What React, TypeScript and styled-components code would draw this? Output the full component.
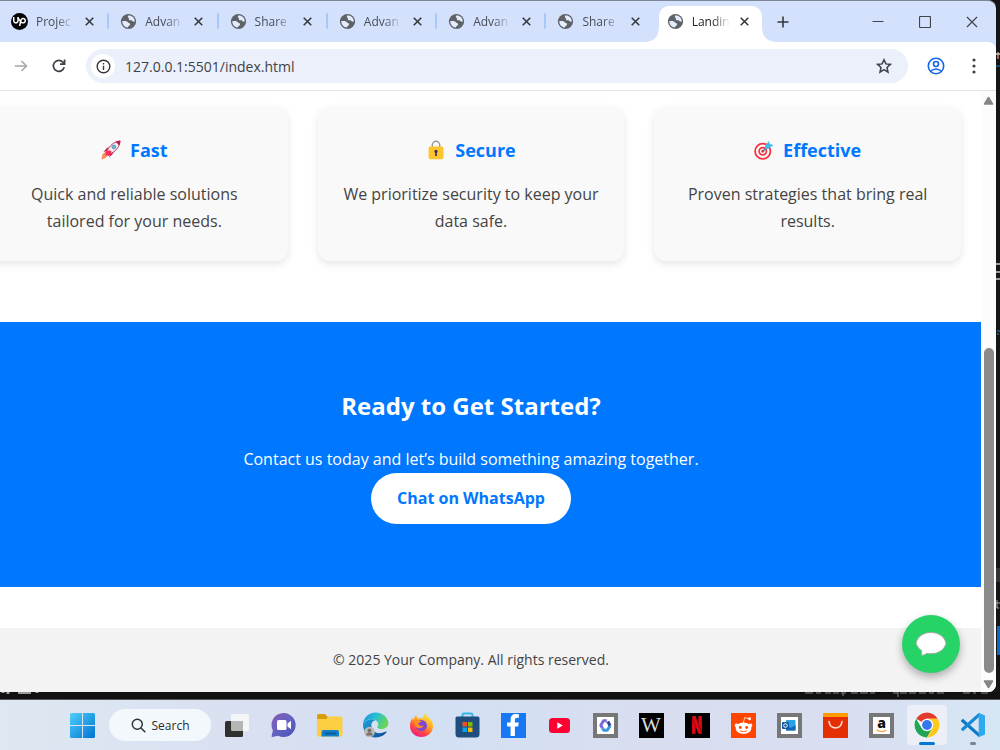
import React from 'react';
import styled, { createGlobalStyle } from 'styled-components';
import { FaFacebookF, FaRedditAlien } from 'react-icons/fa';
import { SiNetflix, SiUpwork } from 'react-icons/si';

const GlobalStyle = createGlobalStyle`
  * { box-sizing: border-box; }
  body { margin: 0; background: #141414; font-family: "Open Sans", "Noto Sans", sans-serif; }
  h2, h3, p { margin: 0; }
  svg { display: block; flex: none; }
  button { border: 0; padding: 0; background: none; font: inherit; color: inherit; }
`;

/* ---------- Desktop ---------- */

const Desktop = styled.div`
  min-height: 100vh;
  display: flex;
  flex-direction: column;
  overflow: hidden;
`;

const WindowRow = styled.div`
  flex: 1;
  display: flex;
  background: #161616;
`;

const BrowserWindow = styled.div`
  position: relative;
  flex: 1;
  min-width: 0;
  display: flex;
  flex-direction: column;
  overflow: hidden;
  border-top: 1px solid #7d8797;
  border-radius: 0 8px 8px 0;
  background: #d3e1fd;
`;

const StatusStrip = styled.div`
  height: 8px;
  display: flex;
  background: #111;
  border-bottom: 1px solid #55565a;
`;

/* ---------- Tab strip ---------- */

const TabStrip = styled.div`
  height: 41px;
  display: flex;
  align-items: center;
`;

const TabList = styled.div`
  flex: 0 1 765px;
  min-width: 0;
  height: 100%;
  display: flex;
`;

const Tab = styled.div<{ $active?: boolean; $divided?: boolean }>`
  position: relative;
  flex: 1;
  min-width: 0;
  display: flex;
  align-items: center;
  padding: 0 14px 0 11px;
  color: ${p => (p.$active ? '#202124' : '#474c57')};

  &::after {
    content: '';
    display: ${p => (p.$divided ? 'block' : 'none')};
    position: absolute;
    right: 0;
    top: 12px;
    width: 2px;
    height: 16px;
    border-radius: 1px;
    background: #a8c7fa;
  }
`;

const ActiveShape = styled.div`
  position: absolute;
  inset: 5px 3px 0 3px;
  border-radius: 10px 10px 0 0;
  background: #fff;

  &::before, &::after {
    content: '';
    position: absolute;
    bottom: 0;
    width: 12px;
    height: 12px;
  }
  &::before {
    right: 100%;
    background: radial-gradient(circle at 0 0, transparent 11px, #fff 12px);
  }
  &::after {
    left: 100%;
    background: radial-gradient(circle at 100% 0, transparent 11px, #fff 12px);
  }
`;

const TabContent = styled.div`
  position: relative;
  flex: 1;
  min-width: 0;
  display: flex;
  align-items: center;
`;

const TabTitle = styled.span`
  flex: 1;
  min-width: 0;
  margin: 0 6px 0 8px;
  white-space: nowrap;
  font-size: 12px;
  line-height: 18px;
  mask-image: linear-gradient(90deg, #000 50%, transparent 92%);
`;

const IconButton = styled.button<{ $w: number }>`
  width: ${p => p.$w}px;
  height: 32px;
  flex: none;
  display: flex;
  align-items: center;
  justify-content: center;
`;

const WindowControls = styled.div`
  margin-left: auto;
  display: flex;
`;

/* ---------- Toolbar ---------- */

const Toolbar = styled.div`
  height: 49px;
  display: flex;
  align-items: center;
  padding: 0 4px 0 2px;
  background: #fff;
  border-bottom: 1px solid #e1e3e6;
  border-radius: 0 8px 0 0;
`;

const AddressBar = styled.div`
  flex: 1;
  height: 34px;
  display: flex;
  align-items: center;
  margin: 0 8px;
  padding: 0 8px 0 5px;
  border-radius: 17px;
  background: #ebf0fa;
`;

const SiteInfo = styled.button`
  width: 24px;
  height: 24px;
  display: flex;
  align-items: center;
  justify-content: center;
  border-radius: 50%;
  background: #fff;
`;

const UrlInput = styled.input`
  flex: 1;
  min-width: 0;
  padding: 0;
  margin-left: 10px;
  border: 0;
  outline: 0;
  background: none;
  color: #3f4247;
  font: 14px "Open Sans", "Noto Sans", sans-serif;
`;

/* ---------- Web page ---------- */

const ScrollArea = styled.div`
  flex: 1;
  display: flex;
  background: #fff;
`;

const PageView = styled.div`
  flex: 1;
  min-width: 0;
  overflow: hidden;
`;

/* The page is wider than the view and scrolled a little to the right. */
const Page = styled.main`
  min-height: 100%;
  margin-left: -39px;
  display: flex;
  flex-direction: column;
  text-align: center;
`;

const Features = styled.section`
  display: grid;
  grid-template-columns: repeat(3, 1fr);
  gap: 30px;
  padding: 16px 20px 61px;
`;

const Card = styled.article`
  min-height: 154px;
  padding: 28px 24px 26px;
  border-radius: 12px;
  background: #f9f9f9;
  box-shadow: 0 3px 8px rgba(0, 0, 0, 0.1);
`;

const CardTitle = styled.h3`
  display: flex;
  align-items: center;
  justify-content: center;
  gap: 9px;
  margin-bottom: 16px;
  color: #0077ff;
  font-size: 18px;
  line-height: 30px;
`;

const CardText = styled.p`
  color: #444;
  font-size: 16px;
  line-height: 27px;
`;

const CallToAction = styled.section`
  display: flex;
  flex-direction: column;
  align-items: center;
  padding: 64px 20px 63px;
  margin-bottom: 41px;
  background: #0077ff;
  color: #fff;
`;

const CtaTitle = styled.h2`
  margin-bottom: 20px;
  font-size: 24px;
  line-height: 40px;
`;

const CtaText = styled.p`
  font-size: 16px;
  line-height: 27px;
`;

const CtaLink = styled.a`
  padding: 12px 26px;
  border-radius: 26px;
  background: #fff;
  color: #0077ff;
  font-size: 16px;
  font-weight: 700;
  line-height: 27px;
  text-decoration: none;
`;

const Footer = styled.footer`
  flex: 1;
  padding: 19px;
  background: #f3f3f3;
  color: #444;
  font-size: 14px;
  line-height: 26px;
`;

const ChatButton = styled.button`
  position: absolute;
  right: 36px;
  bottom: 19px;
  width: 58px;
  height: 58px;
  display: flex;
  align-items: center;
  justify-content: center;
  border-radius: 50%;
  background: #25d366;
  box-shadow: 0 4px 8px rgba(0, 0, 0, 0.3);
`;

const Scrollbar = styled.div`
  width: 15px;
  display: flex;
  flex-direction: column;
  align-items: center;
  padding: 5px 0 3px;
  background: #fcfcfc;
`;

const ScrollSpace = styled.div`
  flex: 243;
`;

const ScrollThumb = styled.div`
  flex: 324;
  width: 10px;
  margin-bottom: 7px;
  border-radius: 5px;
  background: #8b8b8b;
`;

/* ---------- Taskbar ---------- */

const Taskbar = styled.nav`
  height: 50px;
  display: flex;
  align-items: center;
  padding-left: 59px;
  background: linear-gradient(90deg, #dde8f2 0%, #d9e0f1 25%, #d3e0f3 45%, #d8def0 65%, #d9dff0 85%, #d6e6f5 100%);
`;

const TaskItem = styled.button<{ $active?: boolean; $running?: boolean }>`
  position: relative;
  flex: none;
  width: 46px;
  height: 50px;
  display: flex;
  align-items: center;
  justify-content: center;

  &::before {
    content: '';
    display: ${p => (p.$active ? 'block' : 'none')};
    position: absolute;
    inset: 5px 3px;
    border-radius: 4px;
    background: #eceff8;
  }
  &::after {
    content: '';
    display: ${p => (p.$active || p.$running ? 'block' : 'none')};
    position: absolute;
    bottom: 5px;
    width: ${p => (p.$active ? 16 : 6)}px;
    height: 3px;
    border-radius: 2px;
    background: ${p => (p.$active ? '#0078d4' : '#7d838b')};
  }
  svg { position: relative; }
`;

const SearchBox = styled.button`
  flex: none;
  width: 102px;
  height: 32px;
  display: flex;
  align-items: center;
  justify-content: center;
  gap: 6px;
  margin: 0 3px 0 4px;
  border-radius: 16px;
  background: #f3f8fc;
  color: #2b2b2b;
  font-size: 12px;
`;

const Tile = styled.span<{ $bg: string; $framed?: boolean }>`
  width: 25px;
  height: 25px;
  display: flex;
  align-items: center;
  justify-content: center;
  border: ${p => (p.$framed ? '4px solid #777' : '0')};
  background: ${p => p.$bg};
`;

const SerifMark = styled.span`
  color: #ddd;
  font: 21px/25px "Liberation Serif", serif;
`;

/* ---------- Drawings ---------- */

const Globe = () => (
  <svg width="17" height="17" viewBox="0 0 17 17">
    <circle cx="8.500" cy="8.500" r="7.600" fill="#5f6368" />
    <path d="M8.400 2.500C9.700 2.100 11.700 2.700 12.900 4c1.200 1.200 1.900 2.700 1.900 4.300-.9.600-2 .4-2.400-.4-.4-.9-1.300-.7-2.100-.7-1.100 0-1.700-.8-1.400-1.800.2-.6-.9-.7-1-1.500 0-.7-.1-1.200.5-1.400zM2.200 8.300c1.300-.4 3.400-.3 4.700.2 1.100.4 1 1.300 2 1.600 1.100.3 1.500 1 1 1.900-.4.700-1.300.6-1.600 1.400-.2.600-.4 1.100-1 1.200-2.900-.6-5-3.100-5.100-6.300z" fill="#e3ecfd" />
  </svg>
);

const Cross = ({ size = 9, weight = 1.7, color = '#33363b' }: { size?: number; weight?: number; color?: string }) => (
  <svg width={size} height={size} viewBox="0 0 10 10" stroke={color} strokeWidth={weight}>
    <path d="M.8.8l8.400 8.400M9.200.8L.8 9.200" />
  </svg>
);

const Rocket = () => (
  <svg width="20" height="20" viewBox="0 0 21 21">
    <path d="M5.500 9.300L8 7.200l-1.800 4.300-3.700 1.100zM11.700 15.300l2.100-2.700-4.200 2-1.200 3.900z" fill="#c2184b" />
    <path d="M3.300 13.400c2-.8 4 1.300 3.300 3.200-.7 2-3.400 3.700-6 3.800.1-2.600.7-6 2.700-7z" fill="#ff8b5a" />
    <path d="M5.200 15.800C6 9.600 11.500 1.800 20 1c-.5 8.500-8.300 14-14.800 14.800z" fill="#f3eef1" stroke="#c2184b" strokeWidth=".9" />
    <path d="M15.300 1.900C17 1.200 18.600.7 20.300.7c0 1.700-.4 3.400-1.100 5z" fill="#c2184b" />
    <circle cx="13.500" cy="7.300" r="2.100" fill="#6fb3d2" stroke="#497f9b" strokeWidth=".6" />
    <path d="M4.500 12.700c2.500-2 5.600-2.200 6.300-1.200.8 1-.4 4-2.800 5.300-1.500-.2-3.100-2-3.500-4.100z" fill="#f72b58" />
  </svg>
);

const Lock = () => (
  <svg width="20" height="20" viewBox="0 0 21 21">
    <path d="M6.600 8V5.300a3.900 3.900 0 0 1 7.800 0V8" fill="none" stroke="#98979d" strokeWidth="1.500" />
    <rect x="2.700" y="6.800" width="15.600" height="13.400" rx="1.700" fill="#fcc52f" />
    <circle cx="10.500" cy="12" r="1.700" fill="#432b58" />
    <path d="M9.800 12h1.400l.3 4.700h-2z" fill="#432b58" />
  </svg>
);

const Target = () => (
  <svg width="20" height="20" viewBox="0 0 21 21">
    <g fill="#fff" stroke="#f7343d" strokeWidth="1.900">
      <circle cx="9.200" cy="11.800" r="8" />
      <circle cx="9.200" cy="11.800" r="3.800" />
    </g>
    <circle cx="9.200" cy="11.800" r="1.500" fill="#d62c3b" />
    <path d="M9.500 11.500l7-6.500" stroke="#258bc1" strokeWidth="1.500" />
    <path d="M11.500 6.500L15.400 1l1.200 3.300 3.900.9-5.300 4.100-3.500.5z" fill="#44b9ed" />
  </svg>
);

const Bubble = () => (
  <svg width="32" height="28" viewBox="0 0 32 28">
    <path d="M6.600 20.600C3.200 18.600 2 15.500 1 13.300 2.200 7 8 2.500 16 2.500s13.800 4.500 15 10.800C29.500 19.500 24 23.700 16 23.700c-1.600 0-2.900-.1-4.200-.4-1.400 1.200-3 1.800-5.400 2.100.4-1.400.5-3 .2-4.800z" fill="#fff" stroke="#a4aaa5" strokeWidth="1" />
  </svg>
);

const Arrow = ({ down }: { down?: boolean }) => (
  <svg width="11" height="9" viewBox="0 0 11 9">
    <path d={down ? 'M1.500 1h8L5.500 7.500z' : 'M1.500 8h8L5.500 1.500z'} fill="#858585" stroke="#858585" strokeWidth="1.500" strokeLinejoin="round" />
  </svg>
);

const WindowsLogo = () => (
  <svg width="25" height="25" viewBox="0 0 25 25">
    <defs>
      <linearGradient id="win" x1="0" y1="0" x2="1" y2="1">
        <stop offset="0" stopColor="#4fd0fb" />
        <stop offset="1" stopColor="#0072d2" />
      </linearGradient>
    </defs>
    <path d="M1.500 0H12v12H0V1.500A1.500 1.500 0 0 1 1.500 0zM13 0h10.500A1.500 1.500 0 0 1 25 1.500V12H13zM0 13h12v12H1.500A1.500 1.500 0 0 1 0 23.500zM13 13h12v10.500a1.500 1.500 0 0 1-1.500 1.500H13z" fill="url(#win)" />
  </svg>
);

const TaskView = () => (
  <svg width="26" height="25" viewBox="0 0 26 25">
    <rect x="7" y="1" width="18" height="17" rx="1.500" fill="#f5f6f7" />
    <rect x="1" y="8" width="18" height="16" rx="1.500" fill="#30302f" />
    <path d="M7 8h12v10H8.500A1.500 1.500 0 0 1 7 16.500z" fill="#b4b5b5" />
  </svg>
);

const ChatApp = () => (
  <svg width="25" height="26" viewBox="0 0 25 26">
    <defs>
      <linearGradient id="chat" x1="0" y1="0" x2="1" y2="1">
        <stop offset="0" stopColor="#8a5bb5" />
        <stop offset=".5" stopColor="#6264c2" />
        <stop offset="1" stopColor="#4753ba" />
      </linearGradient>
    </defs>
    <path d="M12.500 1a12 12 0 1 1-5.300 22.700L1.300 25c-.6 0-.9-.4-.7-1l1.300-5.400A12 12 0 0 1 12.500 1z" fill="url(#chat)" />
    <rect x="6" y="8" width="9.500" height="10" rx="1.500" fill="#fff" />
    <path d="M16.500 11.500l3.500-2.700v8.400l-3.500-2.700z" fill="#fff" />
  </svg>
);

const FolderApp = () => (
  <svg width="27" height="24" viewBox="0 0 27 24">
    <path d="M1 2.500A1.500 1.500 0 0 1 2.500 1H9l3 3-2 4H1z" fill="#dc9b0c" />
    <path d="M1 6h9l2.500-2.500H25A1.500 1.500 0 0 1 26.500 5v17A1.500 1.500 0 0 1 25 23.500H2.500A1.500 1.500 0 0 1 1 22z" fill="#fccf42" />
    <path d="M5.500 23.500V19a2 2 0 0 1 2-2H21a2 2 0 0 1 2 2v4.500z" fill="#117fca" />
    <rect x="8.500" y="19.500" width="12" height="2" rx="1" fill="#0a5b98" />
  </svg>
);

const EdgeApp = () => (
  <svg width="27" height="26" viewBox="0 0 27 26">
    <defs>
      <linearGradient id="edgeTop" x1="0" y1="0" x2="1" y2=".4">
        <stop offset="0" stopColor="#168cdb" />
        <stop offset=".5" stopColor="#29bfd4" />
        <stop offset="1" stopColor="#66d75a" />
      </linearGradient>
      <linearGradient id="edgeLow" x1="0" y1="0" x2="1" y2="1">
        <stop offset="0" stopColor="#1ba3dd" />
        <stop offset="1" stopColor="#104b91" />
      </linearGradient>
    </defs>
    <path d="M1 12C1.500 5.500 7 .5 13.500.5 21 .5 26.300 5.800 26.300 11c0 3.800-3 6-6.600 6-2.700 0-4.700-1-4.400-2.100.2-.7 1-1.200 1-2.700 0-2.700-3-4.900-6.900-4.900C5.500 7.300 2.700 9 1 12z" fill="url(#edgeTop)" />
    <path d="M1 12c2-3.200 5-4.700 8.400-4.700 1.600 0 3 .3 4.200 1-3.400.6-4.600 3.500-4.200 6.200.5 4.200 4.600 7.300 9.200 6.600 2.300-.3 4.400-1.200 5.300-1.500.6-.2.900.2.600.7-2 3.100-6.100 5.200-10.800 5.200C6.500 25.500.5 19.500 1 12z" fill="url(#edgeLow)" />
    <circle cx="7.500" cy="20" r="5.300" fill="#bcbab8" />
    <circle cx="7.500" cy="18.300" r="1.900" fill="#77706c" />
    <path d="M4.200 23.500c.2-2.600 1.600-3.300 3.300-3.300s3.100.7 3.300 3.300z" fill="#77706c" />
  </svg>
);

const FirefoxApp = () => (
  <svg width="25" height="26" viewBox="0 0 25 26">
    <defs>
      <linearGradient id="fox" x1=".8" y1="0" x2=".25" y2="1">
        <stop offset="0" stopColor="#fff24a" />
        <stop offset=".4" stopColor="#ffab25" />
        <stop offset=".7" stopColor="#ff4b3d" />
        <stop offset="1" stopColor="#e9188b" />
      </linearGradient>
    </defs>
    <path d="M16.200 1c.7 2.800 3.700 4.300 5.500 6.500 1.800 2.200 2.600 4.600 2.300 7.500-.6 5.700-5.400 10-11.500 10C6 25 1 20.200 1 14c0-3.500 1-6 2.500-8 .1 1 .3 1.600.7 2.200C5 7 5.300 4.500 7.300 2.700c0 1.600.8 2.800 2 3.800 1.500-.7 3-.6 4.700-.1.200-2.100.8-4.100 2.200-5.400z" fill="url(#fox)" />
    <circle cx="12.400" cy="13.600" r="5.500" fill="#7f45d5" />
    <path d="M4.200 8.300c2-.9 4.300-.5 5.300.5l3.400.2c-.5 1.300-3.300 1.400-3.500 2.500-.2 2 3.100 3 5.400 1.800-1 3.500-6.800 4.300-8.700.2-.7-1.600-.4-3.500-1.900-5.200z" fill="#ff8b24" />
  </svg>
);

const StoreApp = () => (
  <svg width="25" height="26" viewBox="0 0 25 26">
    <path d="M7.500 6V3A1.500 1.500 0 0 1 9 1.500h7A1.500 1.500 0 0 1 17.500 3v3" fill="none" stroke="#31b9e9" strokeWidth="2" />
    <path d="M.5 6A1.500 1.500 0 0 1 2 4.500h21A1.500 1.500 0 0 1 24.500 6v16a3.500 3.500 0 0 1-3.500 3.500H4A3.500 3.500 0 0 1 .5 22z" fill="#1e4d7e" />
    <path d="M7.500 10H12v4.500H7.500z" fill="#f25022" />
    <path d="M13 10h4.500v4.500H13z" fill="#7fba00" />
    <path d="M7.500 15.500H12V20H7.500z" fill="#00a4ef" />
    <path d="M13 15.500h4.500V20H13z" fill="#ffb900" />
  </svg>
);

const YoutubeApp = () => (
  <svg width="21" height="15" viewBox="0 0 21 15">
    <rect width="21" height="15" rx="3.500" fill="#ff0033" />
    <path d="M8.300 4.300l5.500 3.200-5.500 3.200z" fill="#fff" />
  </svg>
);

const CopilotApp = () => (
  <svg width="13" height="13" viewBox="0 0 13 13" fill="none" strokeWidth="3" strokeLinejoin="round">
    <path d="M7.800 1.700H4.500L1.800 6.300l1.700 3" stroke="#7a6bd8" />
    <path d="M3.500 9.300l1.500 2h3.300l2.800-4.500" stroke="#3c98dc" />
    <path d="M11.100 6.800L8.800 2.500" stroke="#344397" />
  </svg>
);

const OutlookApp = () => (
  <svg width="14" height="13" viewBox="0 0 14 13">
    <rect x="4" y="1" width="9.500" height="10.500" rx=".8" fill="#28a3e5" />
    <path d="M4 6l4.700 3 4.800-3v5.500H4z" fill="#1267b5" />
    <rect x="0" y="3" width="7" height="7" rx=".8" fill="#0f5ca8" />
    <circle cx="3.500" cy="6.500" r="1.800" fill="none" stroke="#fff" />
  </svg>
);

const ShopApp = () => (
  <svg width="25" height="25" viewBox="0 0 25 25">
    <path d="M0 0h25v25H0z" fill="#e62e04" />
    <path d="M0 0h25v4H0z" fill="#ff9a00" />
    <path d="M6 8.500c1 8.500 12 8.500 13 0" fill="none" stroke="#ffd9ce" strokeWidth="1.700" strokeLinecap="round" />
  </svg>
);

const AmazonApp = () => (
  <svg width="17" height="17" viewBox="0 0 17 17" overflow="visible">
    <text x="8.500" y="11" textAnchor="middle" fontFamily="Open Sans, sans-serif" fontWeight="800" fontSize="14" fill="#111">a</text>
    <path d="M3.500 12.800c3 2.100 7 2.100 9.700.3" fill="none" stroke="#f6a64a" strokeWidth="1.300" />
  </svg>
);

const ChromeApp = () => (
  <svg width="26" height="26" viewBox="0 0 26 26">
    <circle cx="13" cy="13" r="12.500" fill="#fff" />
    <path d="M13 13L2.200 6.800A12.500 12.500 0 0 1 23.800 6.800H13z" fill="#e33b2e" />
    <path d="M2.200 6.800A12.500 12.500 0 0 0 13 25.500l5.400-9.400L13 13 7.600 16.100z" fill="#23a455" />
    <path d="M23.800 6.800A12.500 12.500 0 0 1 13 25.500l5.400-9.400L13 6.800z" fill="#fdc91c" />
    <circle cx="13" cy="13" r="6.200" fill="#fff" />
    <circle cx="13" cy="13" r="4.900" fill="#3478ed" />
  </svg>
);

const CodeApp = () => (
  <svg width="26" height="26" viewBox="0 0 26 26">
    <path d="M1 8.600l2-1.800 16.500 14.700-.8 3.600L1.200 9.500z" fill="#0c79c5" />
    <path d="M1 17.400l2 1.800L19.500 4.500 18.700.9 1.200 16.500z" fill="#1689d2" />
    <path d="M18.700.7L25 3.400v19.200l-6.300 2.700z" fill="#2fa9ee" />
  </svg>
);

/* Slivers of the editor that show past the right edge of the browser. */
const EditorEdge = () => (
  <svg width="4" height="692" viewBox="0 0 4 692">
    <path d="M1 52h2v7H1z" fill="#b65b3b" />
    <path d="M0 54h4M0 264h4M0 272h4M0 279h4" stroke="#c9c9c9" strokeWidth="1.500" />
    <path d="M0 66h4" stroke="#1979bd" />
    <path d="M0 568h4v14H0z" fill="#333" />
    <path d="M1 331h3M1 334h2" stroke="#3487bd" />
    <path d="M1 600v8h2M0 603h4" stroke="#aaa" fill="none" />
    <path d="M1 626h3v29H1z" fill="#0e6ac0" />
  </svg>
);

/* The bottom edges of the editor's status line, cut by the window above. */
const StatusMarks = () => (
  <svg width="100%" height="7">
    <path d="M3 0v1M8 0v2M37 0v1" stroke="#999" strokeWidth="3" />
    <path d="M18 1h13" stroke="#999" strokeWidth="2" />
    <path d="M805 1h8m3 0h5m4 0h6m2 0h6m2 0h5m5 0h7m2 0h8m2 0h5m18 0h5m2 0h7m2 0h7m3 0h7m3 0h5m3 0h7m19 0h7m3 0h3m5 0h7" stroke="#858585" strokeWidth="1" />
    <path d="M843 1v3M898 0v5" stroke="#858585" />
  </svg>
);

/* ---------- Data ---------- */

const tabs = [
  { title: 'Projec', brand: true },
  { title: 'Advan' },
  { title: 'Share' },
  { title: 'Advan' },
  { title: 'Advan' },
  { title: 'Share' },
  { title: 'Landin', active: true },
];

const features = [
  { icon: <Rocket />, title: 'Fast', text: 'Quick and reliable solutions tailored for your needs.' },
  { icon: <Lock />, title: 'Secure', text: 'We prioritize security to keep your data safe.' },
  { icon: <Target />, title: 'Effective', text: 'Proven strategies that bring real results.' },
];

const apps: { name: string; icon: React.ReactNode; active?: boolean; running?: boolean }[] = [
  { name: 'Task view', icon: <TaskView /> },
  { name: 'Chat', icon: <ChatApp /> },
  { name: 'File Explorer', icon: <FolderApp /> },
  { name: 'Edge', icon: <EdgeApp /> },
  { name: 'Firefox', icon: <FirefoxApp /> },
  { name: 'Store', icon: <StoreApp /> },
  { name: 'Facebook', icon: <Tile $bg="#1877f2"><FaFacebookF size={22} color="#fff" /></Tile> },
  { name: 'YouTube', icon: <YoutubeApp /> },
  { name: 'Microsoft 365', icon: <Tile $bg="#fff" $framed><CopilotApp /></Tile> },
  { name: 'Wikipedia', icon: <Tile $bg="#000"><SerifMark>W</SerifMark></Tile> },
  { name: 'Netflix', icon: <Tile $bg="#000"><SiNetflix size={18} color="#d90814" /></Tile> },
  { name: 'Reddit', icon: <Tile $bg="#ff4500"><FaRedditAlien size={19} color="#fff" /></Tile> },
  { name: 'Outlook', icon: <Tile $bg="#fff" $framed><OutlookApp /></Tile> },
  { name: 'Shopping', icon: <ShopApp /> },
  { name: 'Amazon', icon: <Tile $bg="#fff" $framed><AmazonApp /></Tile> },
  { name: 'Chrome', icon: <ChromeApp />, active: true },
  { name: 'Code', icon: <CodeApp />, running: true },
];

export default function App() {
  return (
    <Desktop>
      <GlobalStyle />
      <WindowRow>
        <BrowserWindow>
          <TabStrip>
            <TabList>
              {tabs.map((tab, i) => (
                <Tab key={i} $active={tab.active} $divided={i < 5}>
                  {tab.active && <ActiveShape />}
                  <TabContent>
                    {tab.brand ? (
                      <svg width="17" height="17" viewBox="0 0 17 17">
                        <circle cx="8.500" cy="8.500" r="8.500" fill="#050505" />
                        <SiUpwork x="2" y="2" size={13} color="#fff" />
                      </svg>
                    ) : (
                      <Globe />
                    )}
                    <TabTitle>{tab.title}</TabTitle>
                    <IconButton $w={12} aria-label="Close tab"><Cross /></IconButton>
                  </TabContent>
                </Tab>
              ))}
            </TabList>
            <IconButton $w={36} aria-label="New tab">
              <svg width="12" height="12" viewBox="0 0 12 12" stroke="#34373c" strokeWidth="1.600"><path d="M6 .5v11M.5 6h11" /></svg>
            </IconButton>
            <WindowControls>
              <IconButton $w={47} aria-label="Minimize">
                <svg width="12" height="12" viewBox="0 0 12 12" stroke="#42454b"><path d="M.5 5.500h11" /></svg>
              </IconButton>
              <IconButton $w={47} aria-label="Maximize">
                <svg width="12" height="12" viewBox="0 0 12 12" stroke="#42454b" fill="none"><rect x=".5" y=".5" width="11" height="11" rx="1" strokeWidth="1.200" /></svg>
              </IconButton>
              <IconButton $w={48} aria-label="Close"><Cross size={12} weight={1} color="#42454b" /></IconButton>
            </WindowControls>
          </TabStrip>

          <Toolbar>
            <IconButton $w={38} aria-label="Forward">
              <svg width="14" height="14" viewBox="0 0 14 14" fill="none" stroke="#a5a7aa" strokeWidth="1.500"><path d="M.8 7h11.700M7.500 2l5 5-5 5" /></svg>
            </IconButton>
            <IconButton $w={38} aria-label="Reload">
              <svg width="14" height="14" viewBox="0 0 14 14" fill="none" stroke="#3f4247" strokeWidth="1.700"><path d="M12.200 8.300A5.500 5.500 0 1 1 11 3.200l1.500 1.600M12.600.5v4.700H8" /></svg>
            </IconButton>
            <AddressBar>
              <SiteInfo aria-label="Site information">
                <svg width="15" height="15" viewBox="0 0 15 15" fill="none" stroke="#34373c" strokeWidth="1.400"><circle cx="7.500" cy="7.500" r="6.300" /><path d="M7.500 6.700V11M7.500 4v1.500" /></svg>
              </SiteInfo>
              <UrlInput aria-label="Address" defaultValue="127.0.0.1:5501/index.html" />
              <IconButton $w={32} aria-label="Bookmark">
                <svg width="16" height="16" viewBox="0 0 16 16" fill="none" stroke="#3f4247" strokeWidth="1.500"><path d="M8 1.700l1.900 4.200 4.600.5L11 9.500l1 4.600-4-2.400-4 2.400 1-4.600L1.500 6.400l4.600-.5z" /></svg>
              </IconButton>
            </AddressBar>
            <IconButton $w={40} aria-label="Profile">
              <svg width="18" height="18" viewBox="0 0 18 18" fill="none" stroke="#1766e8" strokeWidth="1.600"><circle cx="9" cy="9" r="7.700" /><circle cx="9" cy="7" r="2.500" /><path d="M3.700 14.200c2.800-3 7.800-3 10.600 0" /></svg>
            </IconButton>
            <IconButton $w={36} aria-label="Menu">
              <svg width="4" height="16" viewBox="0 0 4 16" fill="#3f4247"><circle cx="2" cy="2" r="1.600" /><circle cx="2" cy="8" r="1.600" /><circle cx="2" cy="14" r="1.600" /></svg>
            </IconButton>
          </Toolbar>

          <ScrollArea>
            <PageView>
              <Page>
                <Features>
                  {features.map(f => (
                    <Card key={f.title}>
                      <CardTitle>{f.icon}{f.title}</CardTitle>
                      <CardText>{f.text}</CardText>
                    </Card>
                  ))}
                </Features>
                <CallToAction>
                  <CtaTitle>Ready to Get Started?</CtaTitle>
                  <CtaText>Contact us today and let’s build something amazing together.</CtaText>
                  <CtaLink href="#chat">Chat on WhatsApp</CtaLink>
                </CallToAction>
                <Footer>© 2025 Your Company. All rights reserved.</Footer>
              </Page>
            </PageView>
            <Scrollbar>
              <Arrow />
              <ScrollSpace />
              <ScrollThumb />
              <Arrow down />
            </Scrollbar>
          </ScrollArea>
          <ChatButton aria-label="Open chat"><Bubble /></ChatButton>
        </BrowserWindow>
        <EditorEdge />
      </WindowRow>
      <StatusStrip><StatusMarks /></StatusStrip>
      <Taskbar>
        <TaskItem aria-label="Start"><WindowsLogo /></TaskItem>
        <SearchBox>
          <svg width="15" height="15" viewBox="0 0 15 15" fill="none" stroke="#303234" strokeWidth="1.500"><circle cx="6.300" cy="6.300" r="5" /><path d="M10 10l4.300 4.300" /></svg>
          Search
        </SearchBox>
        {apps.map(app => (
          <TaskItem key={app.name} aria-label={app.name} $active={app.active} $running={app.running}>
            {app.icon}
          </TaskItem>
        ))}
      </Taskbar>
    </Desktop>
  );
}
